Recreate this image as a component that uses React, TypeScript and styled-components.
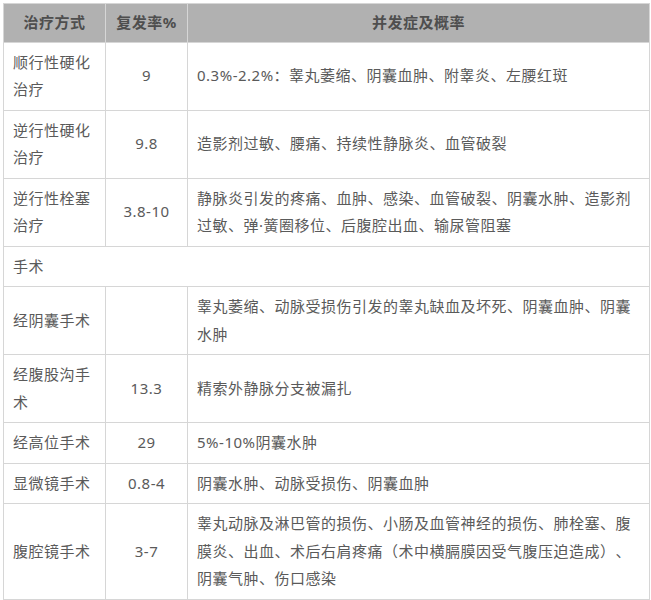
import React from "react";
import styled, { createGlobalStyle } from "styled-components";

const Global = createGlobalStyle`
  html, body { margin: 0; padding: 0; background: #ffffff; }
  body { font-family: "Noto Sans", "Noto Sans CJK SC", sans-serif; }
`;

const Page = styled.div`
  padding: 3px 2px 0 3px;
`;

const Table = styled.table`
  width: 646px;
  table-layout: fixed;
  border-collapse: collapse;
  font-size: 15px;
  letter-spacing: 0.5px;
  line-height: 27.5px;
  color: #5a5a5a;
  text-spacing-trim: space-all;
`;

const HeadCell = styled.th`
  background: #b1b1b1;
  color: #4e4e4e;
  font-weight: 700;
  text-align: center;
  padding: 5px 9px;
  border: 1px solid #d6d6d6;
`;

const Cell = styled.td<{ $center?: boolean }>`
  padding: 6px 9px;
  border: 1px solid #d6d6d6;
  text-align: ${(p) => (p.$center ? "center" : "left")};
  vertical-align: middle;
  word-break: break-all;
`;

type Row = { name: string; rate: string; comp: string };

const nonSurgical: Row[] = [
  { name: "顺行性硬化治疗", rate: "9", comp: "0.3%-2.2%：睾丸萎缩、阴囊血肿、附睾炎、左腰红斑" },
  { name: "逆行性硬化治疗", rate: "9.8", comp: "造影剂过敏、腰痛、持续性静脉炎、血管破裂" },
  {
    name: "逆行性栓塞治疗",
    rate: "3.8-10",
    comp: "静脉炎引发的疼痛、血肿、感染、血管破裂、阴囊水肿、造影剂过敏、弹·簧圈移位、后腹腔出血、输尿管阻塞",
  },
];

const surgical: Row[] = [
  { name: "经阴囊手术", rate: "", comp: "睾丸萎缩、动脉受损伤引发的睾丸缺血及坏死、阴囊血肿、阴囊水肿" },
  { name: "经腹股沟手术", rate: "13.3", comp: "精索外静脉分支被漏扎" },
  { name: "经高位手术", rate: "29", comp: "5%-10%阴囊水肿" },
  { name: "显微镜手术", rate: "0.8-4", comp: "阴囊水肿、动脉受损伤、阴囊血肿" },
  {
    name: "腹腔镜手术",
    rate: "3-7",
    comp: "睾丸动脉及淋巴管的损伤、小肠及血管神经的损伤、肺栓塞、腹膜炎、出血、术后右肩疼痛（术中横膈膜因受气腹压迫造成）、阴囊气肿、伤口感染",
  },
];

const renderRow = (r: Row) => (
  <tr key={r.name}>
    <Cell>{r.name}</Cell>
    <Cell $center>{r.rate}</Cell>
    <Cell>{r.comp}</Cell>
  </tr>
);

export default function App() {
  return (
    <>
      <Global />
      <Page>
        <Table>
          <colgroup>
            <col style={{ width: 102 }} />
            <col style={{ width: 82 }} />
            <col style={{ width: 462 }} />
          </colgroup>
          <thead>
            <tr>
              <HeadCell>治疗方式</HeadCell>
              <HeadCell>复发率%</HeadCell>
              <HeadCell>并发症及概率</HeadCell>
            </tr>
          </thead>
          <tbody>
            {nonSurgical.map(renderRow)}
            <tr>
              <Cell colSpan={3}>手术</Cell>
            </tr>
            {surgical.map(renderRow)}
          </tbody>
        </Table>
      </Page>
    </>
  );
}
